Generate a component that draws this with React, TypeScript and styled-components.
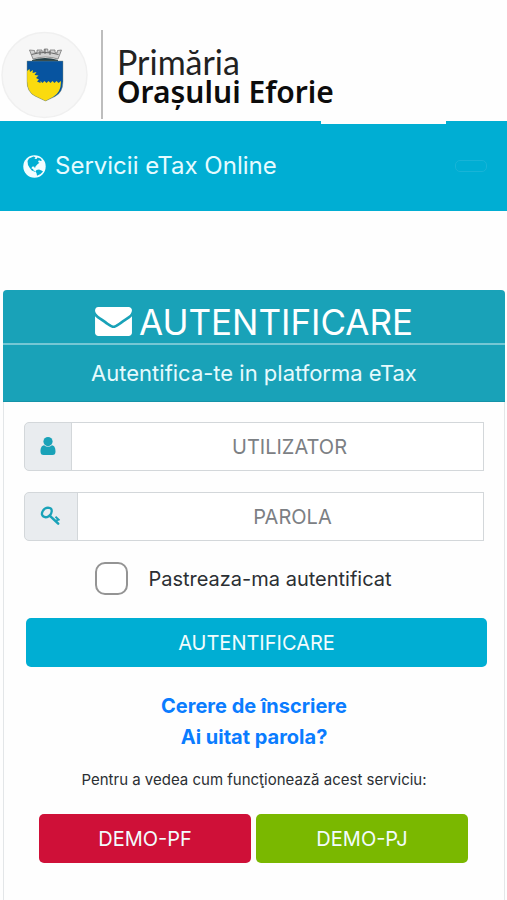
import React from "react";
import styled, { createGlobalStyle } from "styled-components";

const cyan = "#00aed3";
const teal = "#19a2b8";

const GlobalStyle = createGlobalStyle`
  *, *::before, *::after { box-sizing: border-box; }
  body {
    margin: 0;
    background: #fefefe;
    color: #2b2f33;
    font-family: Inter, "Liberation Sans", sans-serif;
    font-size: 20px;
    line-height: 30px;
  }
`;

const Page = styled.div`
  min-height: 100vh;
  display: flex;
  flex-direction: column;
`;

const Banner = styled.header`
  display: flex;
  align-items: flex-end;
  height: 121px;
  padding: 0 0 2px 1px;
`;

const Seal = styled.svg`
  width: 87px;
  height: 88px;
  flex: none;
`;

const BannerText = styled.div`
  height: 89px;
  margin-left: 13px;
  padding: 16px 0 0 14px;
  border-left: 2px solid #bdbdbd;
`;

const Institution = styled.div`
  color: #222;
  font: 400 34px/32px Lato, sans-serif;
`;

const Town = styled.div`
  color: #0c0c0c;
  font: 600 30px/28px "Noto Sans", sans-serif;
  white-space: nowrap;
`;

const Navbar = styled.nav`
  position: relative;
  display: flex;
  align-items: center;
  justify-content: space-between;
  height: 90px;
  padding: 0 20px 0 23px;
  background: ${cyan};

  &::after {
    content: "";
    position: absolute;
    top: 0;
    right: 61px;
    width: 125px;
    height: 3px;
    background: #fefefe;
  }
`;

const Brand = styled.a`
  display: flex;
  align-items: center;
  gap: 9px;
  color: #e6fbff;
  font-size: 24px;
  text-decoration: none;
`;

const Toggler = styled.button`
  width: 32px;
  height: 12px;
  padding: 0;
  border: 1px solid #18b4d7;
  border-radius: 5px;
  background: transparent;
`;

const Card = styled.main`
  flex: 1;
  margin: 79px 2px 0 3px;
  border: 1px solid #e3e6e8;
  border-width: 0 1px;
  border-radius: 4px 4px 0 0;
`;

const CardTitle = styled.h1`
  display: flex;
  align-items: center;
  justify-content: center;
  gap: 7px;
  height: 55px;
  margin: 0 -1px;
  padding-top: 10px;
  border-bottom: 2px solid #75c7d4;
  border-radius: 4px 4px 0 0;
  background: ${teal};
  color: #fff;
  font-size: 35px;
  font-weight: 400;
  line-height: 42px;
`;

const Subtitle = styled.p`
  height: 57px;
  margin: 0 -1px;
  background: ${teal};
  color: #e6fafd;
  border-bottom: 1px solid #1593a8;
  font-size: 22px;
  line-height: 57px;
  text-align: center;
`;

const Form = styled.form`
  display: flex;
  flex-direction: column;
  padding: 20px 17px 0 20px;
`;

const Field = styled.div`
  display: flex;
  height: 49px;
  margin: 0 3px 21px 0;
`;

const FieldIcon = styled.label`
  display: flex;
  align-items: center;
  padding: 0 15px 2px;
  border: 1px solid #d3d7da;
  border-radius: 5px 0 0 5px;
  background: #e9ecef;
  color: ${teal};
`;

const TextInput = styled.input`
  flex: 1;
  min-width: 0;
  margin-left: -1px;
  padding: 1px 16px 0 40px;
  border: 1px solid #d3d7da;
  border-radius: 0;
  background: #fff;
  color: #495057;
  font: inherit;
  text-align: center;

  &::placeholder {
    color: #7c8084;
    opacity: 1;
  }
`;

const Remember = styled.label`
  display: flex;
  align-items: center;
  gap: 20px;
  align-self: center;
  margin-right: 24px;
`;

const Checkbox = styled.input`
  appearance: none;
  width: 33px;
  height: 33px;
  margin: 0;
  border: 2px solid #949494;
  border-radius: 10px;
  background: #fff;

  &:checked {
    background: ${cyan};
  }
`;

const Button = styled.button<{ $color: string }>`
  flex: 1 0 auto;
  height: 49px;
  padding: 0;
  border: 0;
  border-radius: 5px;
  background: ${(p) => p.$color};
  color: #f2fcfd;
  font: inherit;
`;

const SubmitRow = styled.div`
  display: flex;
  margin: 23px 0 0 2px;
`;

const Links = styled.div`
  display: flex;
  flex-direction: column;
  align-items: center;
  margin-top: 24px;
`;

const TextLink = styled.a`
  color: #0a7cff;
  font-weight: 700;
  line-height: 31px;
  text-decoration: none;
`;

const Note = styled.p`
  margin: 15px 0 0;
  font-size: 15px;
  line-height: 24px;
  text-align: center;
`;

const DemoRow = styled.div`
  display: grid;
  grid-template-columns: 1fr 1fr;
  gap: 5px;
  margin: 22px 36px 24px 35px;
`;

const CoatOfArms = () => (
  <Seal viewBox="0 0 87 88" role="img" aria-label="Stema orașului Eforie">
    <circle cx="43.500" cy="44" r="42.500" fill="#f7f7f7" stroke="#f0f0f0" strokeWidth="1.500" />
    <path d="M32 28l-3.500-9 5 .5.500 2.500 2-.5V19h5v2h2l.3-3h3.400l.3 3h2v-2h5v2.500l2 .5.500-2.500 4-.5-3.500 9Q44.500 24 32 28z" fill="#d2d2d2" stroke="#777" strokeWidth=".8" />
    <path d="M30.500 23.500q13-4 27 0M39 24v-4M49 24v-4M44 23v-5" fill="none" stroke="#666" strokeWidth="1" />
    <path d="M31 29q13-4 26 0v3H31z" fill="#263f46" />
    <path d="M26 30h36v20.500q0 11-8 15L44.500 70 34 65q-8-4-8-14.500z" fill="#0754a0" />
    <path d="M26 40l2.500-2 .5 3 3-2-.5 3 4-1-2 3 4 .5-2.500 2.500 3 1.500-2 2 3.500 1.500v-2l2 2 2-2 2 2 2-2 2 2 2-2 2 2 2-2 2 2 2.500-2v.5q0 11-8 15.500L44.500 70 34 65q-8-4-8-14.500z" fill="#fadb0e" />
    <path d="M26 30h36v20.500q0 11-8 15L44.500 70 34 65q-8-4-8-14.500z" fill="none" stroke="#8a9070" strokeWidth=".4" />
  </Seal>
);

const GlobeIcon = () => (
  <svg width="23" height="23" viewBox="0 0 23 23" aria-hidden="true">
    <circle cx="11.500" cy="11.500" r="11.200" fill="#f2fdff" />
    <path d="M6 3.500l4.500-2 2 .8-1 1.500 2 .2 1-1.500 3 1 1.500 2-2 .5-1-1-1 2 1.500.8-2 1.500-2 2.200-.5 1.700-1-1.700-2 .3-.5 1.800 1.600.4.4 1.600 2 .6-.7.6-3-1.300-2-2.400-1.800-3L4.500 6zM13.500 15l2.500-.5 3 1.300 1 .8-2.500 2.500-3.500 1.700-.5-2.800-1-1.500z" fill={cyan} />
  </svg>
);

const EnvelopeIcon = () => (
  <svg width="37" height="29" viewBox="0 256 1792 1408" aria-hidden="true">
    <path fill="currentColor" d="M1792 710v794q0 66-47 113t-113 47h-1472q-66 0-113-47t-47-113v-794q44 49 101 87 362 246 497 345 57 42 92.500 65.500t94.500 48 110 24.500h2q51 0 110-24.500t94.500-48 92.500-65.500q170-123 498-345 57-39 100-87zm0-294q0 79-49 151t-122 123q-376 261-468 325-10 7-42.500 31t-54 38.500-52 32.500-57.500 27-50 9h-2q-23 0-50-9t-57.500-27-52-32.500-54-38.500-42.500-31q-91-64-262-182.500t-205-142.500q-62-42-117-115.500t-55-136.500q0-78 41.500-130t118.500-52h1472q65 0 112.500 47t47.500 113z" />
  </svg>
);

const UserIcon = () => (
  <svg width="16" height="18" viewBox="0 0 16 18" aria-hidden="true">
    <circle cx="8" cy="4.600" r="4.600" fill="currentColor" />
    <path d="M4.100 8.200Q8 11.500 11.900 8.200C14.700 8.500 15.500 11.500 15.500 14.500q0 3.500-3 3.500h-9q-3 0-3-3.500c0-3 .8-6 3.600-6.300z" fill="currentColor" />
  </svg>
);

const KeyIcon = () => (
  <svg width="22" height="20" viewBox="0 0 22 20" fill="none" stroke="currentColor" aria-hidden="true">
    <path d="M2.600 5.300Q4.500 1.600 8 1.600q4 .2 3.700 3.700-.6 4.300-4.700 5.800-3.800.7-5-2.400-.3-1.900.6-3.400z" strokeWidth="2.300" />
    <path d="M9.700 9.700l8.500 8" strokeWidth="2.500" strokeLinecap="round" />
    <path d="M15.500 10.800l4 3.600M15.800 15.500l2-2" strokeWidth="1.900" />
  </svg>
);

export default function App() {
  return (
    <>
      <GlobalStyle />
      <Page>
        <Banner>
          <CoatOfArms />
          <BannerText>
            <Institution>Primăria</Institution>
            <Town>Orașului Eforie</Town>
          </BannerText>
        </Banner>
        <Navbar>
          <Brand href="#">
            <GlobeIcon />
            Servicii eTax Online
          </Brand>
          <Toggler type="button" aria-label="Meniu" />
        </Navbar>
        <Card>
          <CardTitle>
            <EnvelopeIcon />
            AUTENTIFICARE
          </CardTitle>
          <Subtitle>Autentifica-te in platforma eTax</Subtitle>
          <Form onSubmit={(e) => e.preventDefault()}>
            <Field>
              <FieldIcon htmlFor="user" aria-label="Utilizator">
                <UserIcon />
              </FieldIcon>
              <TextInput id="user" type="text" placeholder="UTILIZATOR" />
            </Field>
            <Field>
              <FieldIcon htmlFor="password" aria-label="Parola">
                <KeyIcon />
              </FieldIcon>
              <TextInput id="password" type="password" placeholder="PAROLA" />
            </Field>
            <Remember>
              <Checkbox type="checkbox" />
              Pastreaza-ma autentificat
            </Remember>
            <SubmitRow>
              <Button type="submit" $color={cyan}>AUTENTIFICARE</Button>
            </SubmitRow>
          </Form>
          <Links>
            <TextLink href="#">Cerere de înscriere</TextLink>
            <TextLink href="#">Ai uitat parola?</TextLink>
          </Links>
          <Note>Pentru a vedea cum funcţionează acest serviciu:</Note>
          <DemoRow>
            <Button type="button" $color="#cf1038">DEMO-PF</Button>
            <Button type="button" $color="#7ab800">DEMO-PJ</Button>
          </DemoRow>
        </Card>
      </Page>
    </>
  );
}
